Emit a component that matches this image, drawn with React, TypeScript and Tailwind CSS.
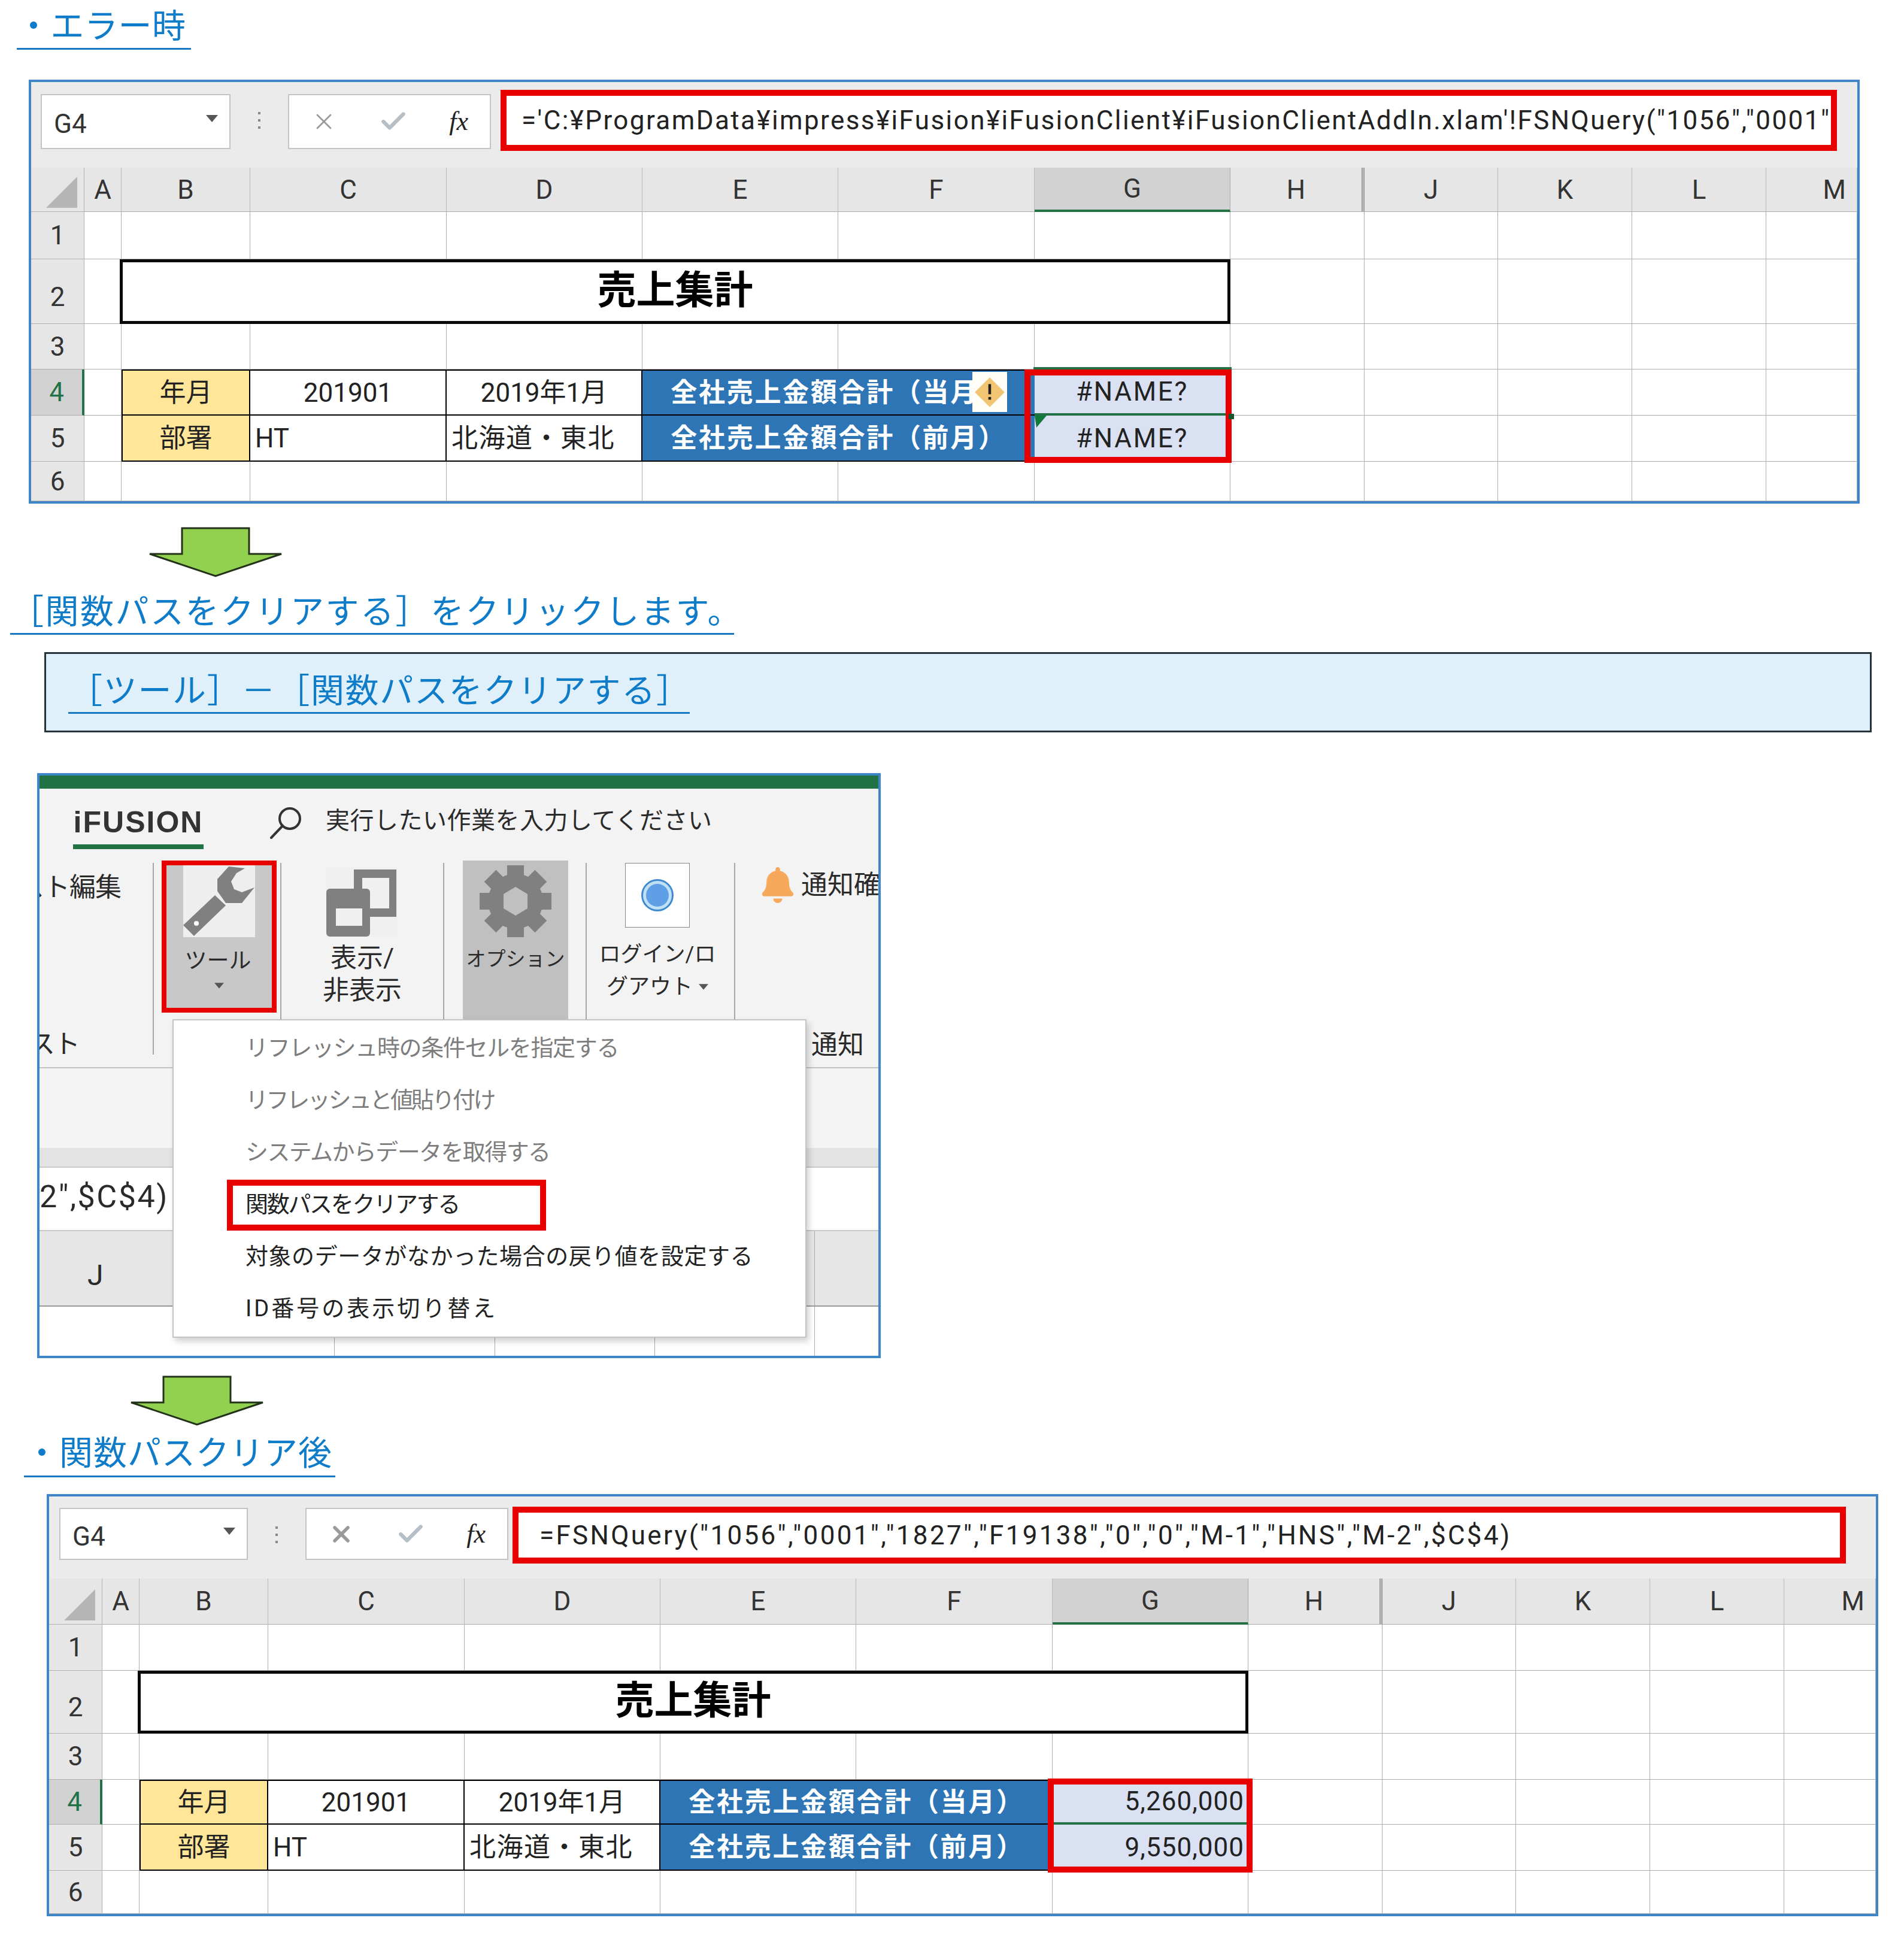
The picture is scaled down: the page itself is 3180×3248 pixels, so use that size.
import * as React from "react";
import { X, Check } from "lucide-react";
import { FaBell } from "react-icons/fa";

type Layout = {
  bar: string;
  name: string;
  fx: string;
  red: string;
  pad: string;
  rows: string;
  hilite: string;
  xStroke: number;
};

const columns = ["A", "B", "C", "D", "E", "F", "G", "H", "J", "K", "L", "M"];

const Line = "border-r border-b border-[#adadad]";
const RowHead = "flex items-center justify-center border-r border-b border-[#b0b0b0] text-[#333]";

const Caret = ({ className }: { className: string }) => (
  <svg viewBox="0 0 20 12" className={className}>
    <path d="M0 0h20L10 12z" fill="#555" />
  </svg>
);

const Arrow = ({ className }: { className: string }) => (
  <svg viewBox="0 0 224 84" className={className}>
    <path d="M56 2h112v43h54L112 82 2 45h54z" fill="#92d050" stroke="#22331a" strokeWidth="3" />
  </svg>
);

const Heading = ({ className, children }: { className: string; children: React.ReactNode }) => (
  <div className={`border-b-[3px] border-[#1a78c2] text-[56px] leading-[70px] whitespace-nowrap text-[#0f7cc9] ${className}`}>
    {children}
  </div>
);

const Sheet = ({
  className,
  formula,
  layout,
  g4,
  g5,
  right,
  warn,
}: {
  className: string;
  formula: string;
  layout: Layout;
  g4: string;
  g5: string;
  right?: boolean;
  warn?: boolean;
}) => {
  const empty = (keys: string[], row: number) =>
    keys.map((c) => <div key={`${row}${c}`} className={`${Line} bg-white`} />);
  const valueCell = `flex items-center border-b border-r border-[#999] bg-[#d9e1f2] ${
    right ? "justify-end pr-[6px] tracking-[1px]" : "justify-center tracking-[2.7px]"
  }`;
  const blueCell = "col-span-2 flex items-center justify-center whitespace-nowrap border-black bg-[#2e75b6] font-bold tracking-[2.7px] text-white";

  return (
    <div className={`flex flex-col border-4 border-[#3f86c6] bg-[#ebebeb] text-[44px] leading-none text-[#222] ${className}`}>
      <div className={`flex items-start overflow-hidden ${layout.bar}`}>
        <div className={`flex shrink-0 items-center justify-between border-2 border-[#c4c4c4] bg-white pr-[18px] pl-[20px] text-[#333] ${layout.name}`}>
          <span className="mt-[8px]">G4</span>
          <Caret className="mb-[10px] h-[12px] w-[22px]" />
        </div>
        <div className="mt-[50px] flex w-[96px] shrink-0 flex-col items-center gap-[8px]">
          <span className="h-[4px] w-[4px] bg-[#888]" />
          <span className="h-[4px] w-[4px] bg-[#888]" />
          <span className="h-[4px] w-[4px] bg-[#888]" />
        </div>
        <div className={`flex w-[339px] shrink-0 items-center justify-between border-2 border-[#c4c4c4] bg-white pr-[36px] pl-[36px] ${layout.fx}`}>
          <X className="h-[44px] w-[44px] text-[#9a9a9a]" strokeWidth={layout.xStroke} />
          <Check className="h-[50px] w-[50px] text-[#b6bec6]" strokeWidth={3} />
          <span className="font-['Liberation_Serif'] text-[44px] italic">fx</span>
        </div>
        <div className={`flex shrink-0 items-center overflow-hidden border-[10px] border-[#e80000] bg-white ${layout.red}`}>
          <span className={`whitespace-nowrap ${layout.pad}`}>{formula}</span>
        </div>
      </div>

      <div className={`relative grid flex-1 grid-cols-[89px_62px_215px_328px_327px_327px_328px_327px_224px_223px_224px_224px_1fr] ${layout.rows}`}>
        <div className="flex items-end justify-end border-r border-b border-[#b0b0b0] bg-[#e6e6e6] pr-[10px] pb-[6px]">
          <svg viewBox="0 0 50 50" className="h-[52px] w-[54px]">
            <path d="M50 0v50H0z" fill="#b5b5b5" />
          </svg>
        </div>
        {columns.map((c) => (
          <div
            key={c}
            className={`flex items-center border-b border-[#aaa] text-[#333] ${
              c === "G"
                ? "border-r border-b-[4px] border-r-[#aaa] border-b-[#217346] bg-[#d2d2d2]"
                : c === "H"
                  ? "border-r-[5px] border-double border-r-[#999] bg-[#e6e6e6]"
                  : "border-r border-r-[#bbb] bg-[#e6e6e6]"
            } ${c === "M" ? "justify-end pr-[18px]" : "justify-center"}`}
          >
            {c}
          </div>
        ))}

        <div className={`${RowHead} bg-[#e6e6e6]`}>1</div>
        {empty(columns, 1)}

        <div className={`${RowHead} bg-[#e6e6e6] pt-[18px]`}>2</div>
        {empty(["A"], 2)}
        <div className="col-span-6 -ml-[3px] flex items-center justify-center border-[5px] border-[#0a0a0a] bg-white pb-[4px] text-[65px] font-bold text-black">
          売上集計
        </div>
        {empty(["H", "J", "K", "L", "M"], 2)}

        <div className={`${RowHead} bg-[#e6e6e6]`}>3</div>
        {empty(columns, 3)}

        <div className="flex items-center justify-center border-r-[4px] border-b border-r-[#217346] border-b-[#b0b0b0] bg-[#d2d2d2] text-[#217346]">4</div>
        {empty(["A"], 4)}
        <div className="flex items-center justify-center border-[2px] border-black bg-[#ffe699]">年月</div>
        <div className="flex items-center justify-center border-y-[2px] border-r-[2px] border-black bg-white">201901</div>
        <div className="flex items-center justify-center border-y-[2px] border-r-[2px] border-black bg-white">2019年1月</div>
        <div className={`${blueCell} border-y-[2px]`}>全社売上金額合計（当月）</div>
        <div className={`${valueCell} border-b-[4px] border-b-[#217346]`}>{g4}</div>
        {empty(["H", "J", "K", "L", "M"], 4)}

        <div className={`${RowHead} bg-[#e6e6e6]`}>5</div>
        {empty(["A"], 5)}
        <div className="flex items-center justify-center border-x-[2px] border-b-[2px] border-black bg-[#ffe699]">部署</div>
        <div className="flex items-center border-r-[2px] border-b-[2px] border-black bg-white pl-[8px]">HT</div>
        <div className="flex items-center whitespace-nowrap border-r-[2px] border-b-[2px] border-black bg-white pl-[8px] tracking-[1.5px]">北海道・東北</div>
        <div className={`${blueCell} border-b-[2px]`}>全社売上金額合計（前月）</div>
        <div className={valueCell}>{g5}</div>
        {empty(["H", "J", "K", "L", "M"], 5)}

        <div className={`${RowHead} bg-[#e6e6e6]`}>6</div>
        {empty(columns, 6)}

        {warn && (
          <div className="absolute top-[341px] left-[1572px] flex h-[67px] w-[58px] items-center justify-center bg-[#fffdf6]">
            <svg viewBox="0 0 46 46" className="h-[52px] w-[52px]">
              <path d="M23 1l22 22-22 22L1 23z" fill="#f2c572" />
              <rect x="21" y="11" width="4" height="15" fill="#222" />
              <rect x="21" y="30" width="4" height="4" fill="#222" />
            </svg>
          </div>
        )}
        {warn && <div className="absolute top-[333px] left-[1674px] h-[4px] w-[331px] bg-[#217346]" />}
        {warn && (
          <svg viewBox="0 0 20 20" className="absolute top-[414px] left-[1676px] h-[20px] w-[20px]">
            <path d="M0 0h20L3 20z" fill="#0f7a3a" />
          </svg>
        )}
        <div className={`absolute border-[10px] border-[#e80000] ${layout.hilite}`} />
        {warn && <div className="absolute top-[411px] left-[2000px] h-[9px] w-[9px] bg-[#14532d]" />}
      </div>
    </div>
  );
};

const Divider = ({ className }: { className: string }) => (
  <div className={`mt-[10px] h-[320px] w-[2px] shrink-0 bg-[#a8a8a8] ${className}`} />
);

const Gear = () => (
  <svg viewBox="0 0 120 120" className="h-[120px] w-[120px]">
    {[0, 45, 90, 135].map((deg) => (
      <rect key={deg} x="46" y="0" width="28" height="120" fill="#808080" transform={`rotate(${deg} 60 60)`} />
    ))}
    <circle cx="60" cy="60" r="46" fill="#808080" />
    <path d="M60 36l20 12v24L60 84 40 72V48z" fill="#c0c0c0" />
  </svg>
);

const Panel = () => (
  <div className="relative ml-[62px] mt-[68px] h-[977px] w-[1409px] overflow-hidden border-4 border-[#3d87c8] bg-white text-[#2a2a2a]">
    <div className="h-[22px] bg-[#217346]" />

    <div className="flex h-[114px] items-start bg-[#f3f3f3]">
      <div className="mt-[24px] ml-[56px] w-[218px]">
        <div className="text-center font-['Liberation_Sans'] text-[50px] leading-[64px] font-bold tracking-[2px] whitespace-nowrap text-[#333]">iFUSION</div>
        <div className="mt-[5px] h-[8px] bg-[#217346]" />
      </div>
      <svg viewBox="0 0 54 54" className="mt-[30px] ml-[110px] h-[54px] w-[54px]" fill="none" stroke="#333" strokeWidth="4">
        <circle cx="34" cy="20" r="17" />
        <path d="M22 32L3 52" strokeLinecap="round" />
      </svg>
      <span className="mt-[30px] ml-[40px] whitespace-nowrap text-[40px] leading-[48px] tracking-[0.5px]">実行したい作業を入力してください</span>
    </div>

    <div className="flex h-[351px] items-start bg-[#f3f3f3] text-[44px] leading-[54px]">
      <div className="relative h-full w-[189px] shrink-0 overflow-hidden">
        <div className="mt-[24px] -ml-[36px] w-[230px] tracking-[-1px] whitespace-nowrap text-[44px]">スト編集</div>
        <div className="mt-[208px] -ml-[18px] tracking-[-2px] whitespace-nowrap">スト</div>
      </div>
      <Divider className="" />
      <div className="mt-[6px] ml-[13px] flex h-[254px] w-[192px] shrink-0 flex-col items-center border-[8px] border-[#e80000] bg-[#c8c8c8]">
        <svg viewBox="0 0 120 120" className="h-[120px] w-[120px] bg-[#eeeeee]">
          <path d="M103 5L76 2 57 23v20l14 20h27l21-26-21 8-13-5-5-13 9-14z" fill="#808080" />
          <path d="M53 50L0 100l18 18 53-51z" fill="#808080" />
          <circle cx="22" cy="97" r="4" fill="#fff" />
        </svg>
        <div className="mt-[18px] -ml-[4px] text-[37px] leading-[44px]">ツール</div>
        <Caret className="mt-[14px] h-[10px] w-[16px]" />
      </div>
      <Divider className="ml-[6px]" />
      <div className="mt-[18px] ml-[50px] flex w-[170px] shrink-0 flex-col items-center">
        <svg viewBox="0 0 120 116" className="h-[116px] w-[120px] bg-[#f0f0f0]">
          <path fillRule="evenodd" d="M46 3h71v79H46zM60 17v51h45V17z" fill="#808080" />
          <rect x="0" y="35" width="73" height="80" rx="6" fill="#808080" />
          <rect x="16" y="68" width="44" height="29" fill="#f0f0f0" />
        </svg>
        <div className="mt-[8px] text-center">
          表示/
          <br />
          非表示
        </div>
      </div>
      <Divider className="ml-[50px]" />
      <div className="mt-[6px] ml-[31px] flex h-[345px] w-[176px] shrink-0 flex-col items-center bg-[#c0c0c0] pt-[8px]">
        <Gear />
        <div className="mt-[10px] whitespace-nowrap text-[33px] leading-[54px]">オプション</div>
      </div>
      <Divider className="ml-[29px]" />
      <div className="mt-[10px] ml-[3px] flex w-[230px] shrink-0 flex-col items-center text-[36px] leading-[54px]">
        <div className="flex h-[108px] w-[108px] items-center justify-center border border-[#888] bg-white">
          <div className="flex h-[54px] w-[54px] items-center justify-center rounded-full border-[3px] border-[#3d8ad0] bg-[#bfe0f5]">
            <div className="h-[38px] w-[38px] rounded-full bg-[#5e9fe6]" />
          </div>
        </div>
        <div className="mt-[18px] whitespace-nowrap">ログイン/ロ</div>
        <div className="flex items-center gap-[10px] whitespace-nowrap">
          グアウト
          <Caret className="h-[10px] w-[16px]" />
        </div>
      </div>
      <Divider className="ml-[13px]" />
      <div className="h-full flex-1 overflow-hidden">
        <div className="mt-[17px] ml-[44px] flex items-center gap-[12px] whitespace-nowrap">
          <FaBell className="h-[60px] w-[54px] shrink-0 text-[#f6a95b]" />
          通知確認
        </div>
        <div className="mt-[210px] ml-[127px] whitespace-nowrap">通知</div>
      </div>
    </div>

    <div className="h-[135px] border-t-2 border-[#c2c2c2] bg-[#f4f4f4]" />
    <div className="h-[31px] bg-[#e3e3e3]" />
    <div className="flex h-[108px] items-center border-y-2 border-[#c8c8c8] bg-white pb-[6px]">
      <span className="whitespace-nowrap text-[52px] tracking-[2.5px]">2&quot;,$C$4)</span>
    </div>
    <div className="grid h-[126px] grid-cols-[80px_1214px_1fr] border-b-2 border-[#999] bg-[#e6e6e6]">
      <div />
      <div className="flex items-center pt-[24px] text-[48px]">J</div>
      <div className="border-l border-[#aaa]" />
    </div>
    <div className="flex h-[82px] bg-white">
      <div className="w-[493px] border-r border-[#aaa]" />
      <div className="w-[268px] border-r border-[#aaa]" />
      <div className="w-[267px] border-r border-[#aaa]" />
      <div className="w-[267px] border-r border-[#aaa]" />
    </div>

    <div className="absolute top-[407px] left-[222px] h-[532px] w-[1059px] border-2 border-[#c4c4c4] bg-white pt-[3px] pl-[120px] text-[38px] shadow-[4px_6px_10px_rgba(0,0,0,0.18)]">
      <div className="flex h-[87px] items-center tracking-[-1.35px] text-[#7d7d7d]">リフレッシュ時の条件セルを指定する</div>
      <div className="flex h-[87px] items-center tracking-[-3.4px] text-[#7d7d7d]">リフレッシュと値貼り付け</div>
      <div className="flex h-[87px] items-center tracking-[-1.6px] text-[#7d7d7d]">システムからデータを取得する</div>
      <div className="relative flex h-[87px] items-center tracking-[-2.3px] text-[#222]">
        関数パスをクリアする
        <div className="absolute top-[2px] left-[-31px] h-[85px] w-[533px] border-[10px] border-[#e80000]" />
      </div>
      <div className="flex h-[87px] items-center tracking-[0.55px] text-[#222]">対象のデータがなかった場合の戻り値を設定する</div>
      <div className="flex h-[87px] items-center tracking-[4px] text-[#222]">ID番号の表示切り替え</div>
    </div>
  </div>
);

const App: React.FC = () => {
  return (
    <div className="h-[3248px] w-[3180px] overflow-hidden bg-white font-['Roboto','Noto_Sans_CJK_JP',sans-serif]">
      <Heading className="ml-[28px] h-[83px] w-[291px] pt-[9px] tracking-[0.5px]">・エラー時</Heading>
      <Sheet
        className="mt-[50px] ml-[48px] h-[708px] w-[3058px]"
        formula={`='C:¥ProgramData¥impress¥iFusion¥iFusionClient¥iFusionClientAddIn.xlam'!FSNQuery("1056","0001"`}
        layout={{
          bar: "h-[143px]",
          name: "ml-[16px] mt-[20px] h-[92px] w-[317px]",
          fx: "mt-[20px] h-[92px]",
          red: "ml-[16px] mt-[13px] h-[102px] w-[2232px]",
          pad: "pl-[25px] tracking-[2.4px]",
          rows: "grid-rows-[74px_79px_108px_76px_77px_77px_1fr]",
          hilite: "top-[337px] left-[1659px] h-[156px] w-[346px]",
          xStroke: 1.5,
        }}
        g4="#NAME?"
        g5="#NAME?"
        warn
      />
      <Arrow className="mt-[39px] ml-[248px] h-[84px] w-[224px]" />
      <Heading className="mt-[12px] ml-[17px] h-[84px] w-[1209px] pt-[11px] tracking-[2.5px]">［関数パスをクリアする］をクリックします。</Heading>
      <div className="mt-[29px] ml-[74px] h-[134px] w-[3052px] border-[3px] border-[#26323c] bg-[#dff0fb]">
        <Heading className="ml-[37px] h-[100px] w-[1038px] pt-[27px] pl-[1px] tracking-[1.7px]">［ツール］－［関数パスをクリアする］</Heading>
      </div>
      <Panel />
      <Arrow className="mt-[29px] ml-[217px] h-[84px] w-[224px]" />
      <Heading className="mt-[2px] ml-[40px] h-[84px] w-[520px] pt-[9px] pl-[2px] tracking-[1px]">・関数パスクリア後</Heading>
      <Sheet
        className="mt-[28px] ml-[78px] h-[705px] w-[3059px]"
        formula={`=FSNQuery("1056","0001","1827","F19138","0","0","M-1","HNS","M-2",$C$4)`}
        layout={{
          bar: "h-[137px]",
          name: "ml-[17px] mt-[19px] h-[87px] w-[315px]",
          fx: "mt-[19px] h-[87px]",
          red: "ml-[7px] mt-[17px] h-[95px] w-[2227px]",
          pad: "pl-[35px] tracking-[3.3px]",
          rows: "grid-rows-[77px_77px_105px_77px_75px_77px_1fr]",
          hilite: "top-[334px] left-[1668px] h-[157px] w-[342px]",
          xStroke: 3,
        }}
        g4="5,260,000"
        g5="9,550,000"
        right
      />
    </div>
  );
};

export default App;
